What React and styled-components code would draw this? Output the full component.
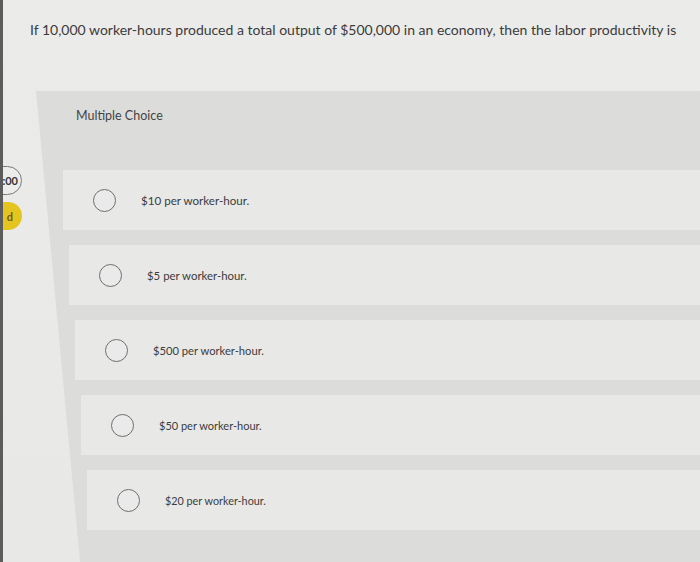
import React from "react";
import styled, { createGlobalStyle } from "styled-components";

const Global = createGlobalStyle`
  html, body { margin: 0; padding: 0; }
  body {
    background: #e9e9e8;
    font-family: Lato, "Open Sans", "Liberation Sans", sans-serif;
    overflow: hidden;
  }
`;

const Page = styled.div`
  display: flex;
  width: 700px;
  height: 562px;
  overflow: hidden;
  background: linear-gradient(180deg, #ebebea 0%, #e8e8e7 100%);
`;

const Rail = styled.aside`
  width: 19px;
  flex: none;
  border-left: 3px solid #5c5c5c;
  display: flex;
  flex-direction: column;
  gap: 7px;
  padding-top: 166px;
  overflow: hidden;
`;

const Pill = styled.div`
  width: 40px;
  height: ${(p) => p.$h}px;
  margin-left: -21px;
  box-sizing: border-box;
  border-radius: 15px;
  display: flex;
  align-items: center;
  justify-content: flex-end;
  padding-right: ${(p) => (p.$tone === "yellow" ? 9 : 3)}px;
  font-size: 11px;
  font-weight: 700;
  color: ${(p) => (p.$tone === "yellow" ? "#6a5a20" : "#333")};
  background: ${(p) => (p.$tone === "yellow" ? "#e4c51f" : "#ececeb")};
  border: ${(p) => (p.$tone === "yellow" ? "none" : "1px solid #7a7a7a")};
`;

const Main = styled.main`
  flex: 1;
  display: flex;
  flex-direction: column;
  min-width: 0;
`;

const Question = styled.p`
  margin: 20px 0 0;
  padding-left: 8px;
  font-size: 14px;
  line-height: 20px;
  color: #3b3b3b;
  white-space: nowrap;
`;

const Panel = styled.section`
  flex: 1;
  margin: 51px 0 0 14px;
  padding-top: 17px;
  background: #dcdcdb;
  clip-path: polygon(0 0, 100% 0, 100% 100%, 44px 100%);
  display: flex;
  flex-direction: column;
`;

const Label = styled.div`
  padding-left: 40px;
  font-size: 12.5px;
  line-height: 16px;
  color: #444;
`;

const Options = styled.ul`
  list-style: none;
  margin: 46px 0 0;
  padding: 0;
  display: flex;
  flex-direction: column;
  gap: 15px;
`;

const Row = styled.li`
  height: 60px;
  margin-left: ${(p) => 27 + p.$indent}px;
  background: #e8e8e7;
  display: flex;
  align-items: center;
  padding-left: 30px;
  gap: 25px;
`;

const Radio = styled.span`
  width: 23px;
  height: 23px;
  flex: none;
  box-sizing: border-box;
  border-radius: 50%;
  border: 1.4px solid #6e6e6e;
  background: #eaeaea;
`;

const OptionText = styled.span`
  font-size: ${(p) => p.$size}px;
  color: #3c3c3c;
  white-space: nowrap;
`;

const choices = [
  "$10 per worker-hour.",
  "$5 per worker-hour.",
  "$500 per worker-hour.",
  "$50 per worker-hour.",
  "$20 per worker-hour.",
];

export default function App() {
  return (
    <>
      <Global />
      <Page>
        <Rail>
          <Pill $h={29}>:00</Pill>
          <Pill $h={28} $tone="yellow">d</Pill>
        </Rail>
        <Main>
          <Question>
            If 10,000 worker-hours produced a total output of $500,000 in an economy, then the labor productivity is
          </Question>
          <Panel>
            <Label>Multiple Choice</Label>
            <Options>
              {choices.map((c, i) => (
                <Row key={c} $indent={i * 6}>
                  <Radio />
                  <OptionText $size={11.6 - i * 0.2}>{c}</OptionText>
                </Row>
              ))}
            </Options>
          </Panel>
        </Main>
      </Page>
    </>
  );
}
